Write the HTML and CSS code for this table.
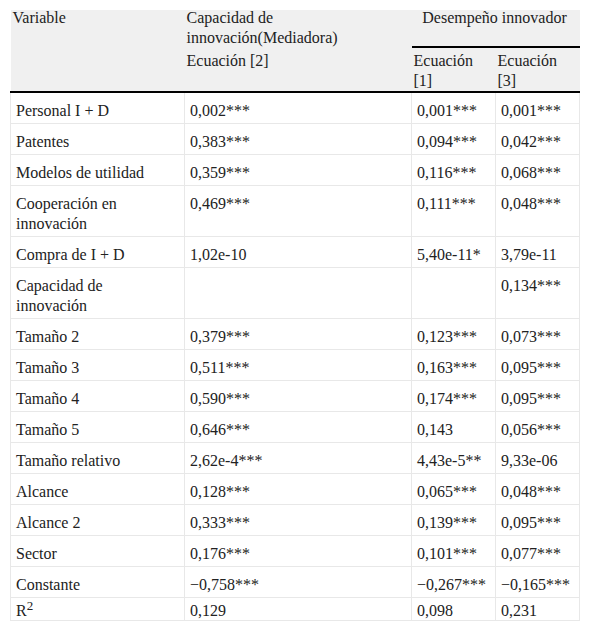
FILE: index.html
```html
<!DOCTYPE html>
<html lang="es">
<head>
<meta charset="utf-8">
<link rel="stylesheet" href="styles.css">
</head>
<body>
<table class="tbl">
  <colgroup>
    <col class="c1"><col class="c2"><col class="c3"><col class="c4">
  </colgroup>
  <thead>
    <tr>
      <th rowspan="2" class="bot"><span class="lift">Variable</span></th>
      <th rowspan="2" class="bot">
        <span class="lift">Capacidad de innovación(Mediadora)</span>
        <span class="eq2">Ecuación [2]</span>
      </th>
      <th colspan="2" class="center under"><span class="lift">Desempeño innovador</span></th>
    </tr>
    <tr>
      <th class="bot sub">Ecuación [1]</th>
      <th class="bot sub">Ecuación [3]</th>
    </tr>
  </thead>
  <tbody>
    <tr><td>Personal I + D</td><td>0,002***</td><td>0,001***</td><td>0,001***</td></tr>
    <tr><td>Patentes</td><td>0,383***</td><td>0,094***</td><td>0,042***</td></tr>
    <tr><td>Modelos de utilidad</td><td>0,359***</td><td>0,116***</td><td>0,068***</td></tr>
    <tr><td>Cooperación en innovación</td><td>0,469***</td><td>0,111***</td><td>0,048***</td></tr>
    <tr><td>Compra de I + D</td><td>1,02e-10</td><td>5,40e-11*</td><td>3,79e-11</td></tr>
    <tr><td>Capacidad de innovación</td><td></td><td></td><td>0,134***</td></tr>
    <tr><td>Tamaño 2</td><td>0,379***</td><td>0,123***</td><td>0,073***</td></tr>
    <tr><td>Tamaño 3</td><td>0,511***</td><td>0,163***</td><td>0,095***</td></tr>
    <tr><td>Tamaño 4</td><td>0,590***</td><td>0,174***</td><td>0,095***</td></tr>
    <tr><td>Tamaño 5</td><td>0,646***</td><td>0,143</td><td>0,056***</td></tr>
    <tr><td>Tamaño relativo</td><td>2,62e-4***</td><td>4,43e-5**</td><td>9,33e-06</td></tr>
    <tr><td>Alcance</td><td>0,128***</td><td>0,065***</td><td>0,048***</td></tr>
    <tr><td>Alcance 2</td><td>0,333***</td><td>0,139***</td><td>0,095***</td></tr>
    <tr><td>Sector</td><td>0,176***</td><td>0,101***</td><td>0,077***</td></tr>
    <tr><td>Constante</td><td>−0,758***</td><td>−0,267***</td><td>−0,165***</td></tr>
    <tr class="last"><td>R<sup>2</sup></td><td>0,129</td><td>0,098</td><td>0,231</td></tr>
  </tbody>
</table>
</body>
</html>
```

FILE: styles.css
```css
html, body {
  margin: 0;
  padding: 0;
  background: #fff;
}
body {
  padding: 10px 0 0 10px;
  font-family: "Liberation Serif", "Times New Roman", serif;
  font-size: 16px;
  color: #222;
}
.tbl {
  border-collapse: collapse;
  table-layout: fixed;
  width: 569px;
}
.c1 { width: 174px; }
.c2 { width: 227px; }
.c3 { width: 84px; }
.c4 { width: 84px; }
.tbl th {
  background: #f0f0f0;
  font-weight: normal;
  text-align: left;
  vertical-align: top;
  line-height: 20px;
  padding: 0 4px 0 2px;
}
.lift {
  display: block;
  margin-top: -2px;
}
.eq2 {
  display: block;
  margin-top: 3px;
}
.tbl th.center { text-align: center; }
.tbl th.under {
  border-bottom: 2px solid #000;
  padding-bottom: 18px;
}
.tbl th.sub { padding-top: 3px; }
.tbl th.bot { border-bottom: 2px solid #000; }
.tbl td {
  vertical-align: top;
  line-height: 20px;
  padding: 8px 6px 2px 5px;
  border: 1px solid #e8e8e8;
  border-top: none;
}
.tbl td:first-child { padding-right: 12px; }
.tbl tr.last td {
  padding-top: 4px;
  padding-bottom: 0;
  line-height: 18px;
}
.tbl sup {
  font-size: 13px;
  line-height: 0;
  vertical-align: 6px;
}
```
